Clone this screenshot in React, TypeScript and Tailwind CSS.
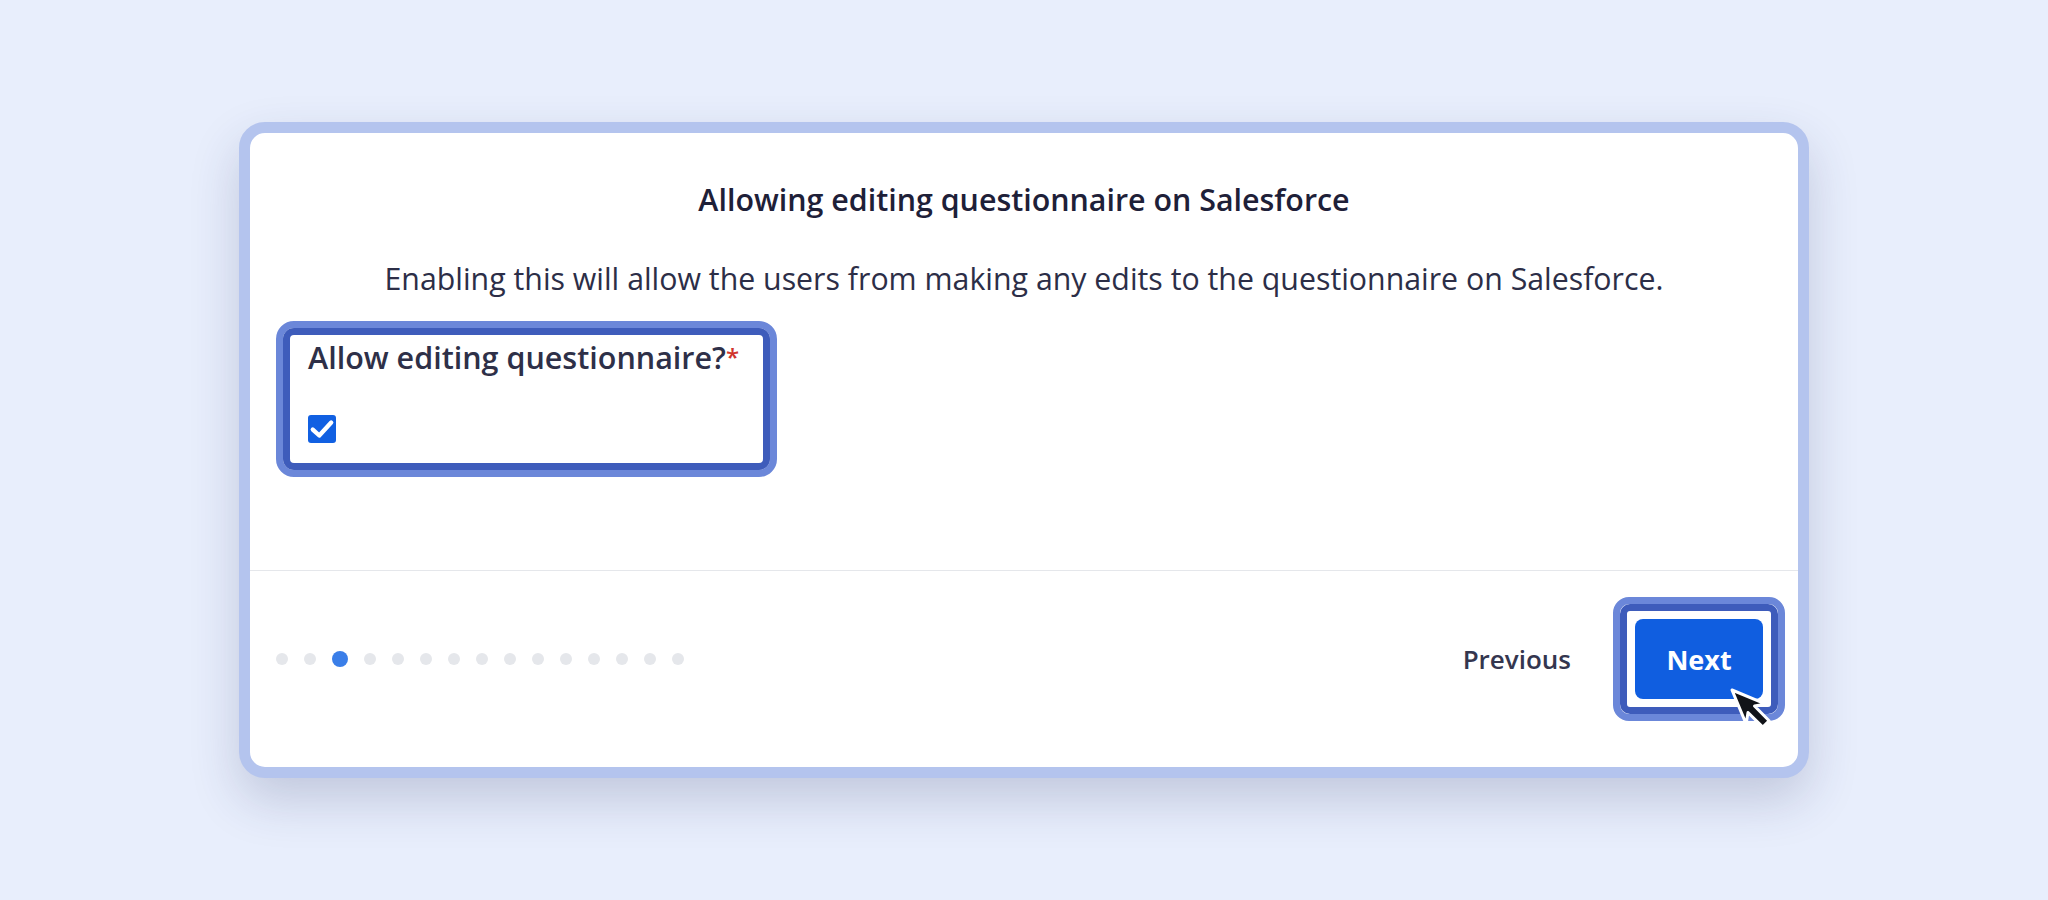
import React from "react";

const font = { fontFamily: "'Open Sans', 'Noto Sans', sans-serif" };

function Cursor() {
  return (
    <svg
      className="absolute left-[110px] top-[84px]"
      width="46"
      height="46"
      viewBox="-2 -2 46 46"
    >
      <path
        d="M0 0 L14.1 33.9 L16 22.5 L30.8 37.1 L37.1 30.8 L22.5 16 L33.9 14.1 Z"
        fill="#111318"
        stroke="#ffffff"
        strokeWidth="3"
        strokeLinejoin="round"
      />
    </svg>
  );
}

export default function App() {
  const dots = Array.from({ length: 15 }, (_, i) => i);
  return (
    <div
      className="w-full h-[900px] bg-[#e8eefc] flex items-center justify-center"
      style={font}
    >
      <div className="w-[1570px] h-[656px] border-[11px] border-[#b4c4ee] rounded-[26px] bg-white shadow-[0_22px_50px_rgba(40,50,100,0.2)] flex flex-col overflow-hidden">
        <div className="h-[437px] px-[26px] pt-[47px] flex flex-col">
          <h1 className="text-center text-[30.4px] leading-[40px] font-semibold text-[#1e2038]">
            Allowing editing questionnaire on Salesforce
          </h1>
          <p className="mt-[41px] text-center text-[30.3px] leading-[36px] text-[#2c2e47]">
            Enabling this will allow the users from making any edits to the
            questionnaire on Salesforce.
          </p>
          <div className="mt-[24px] w-[501px] h-[156px] border-[7px] border-[#6b87d9] rounded-[18px]">
            <div className="h-full border-[7px] border-[#3e5cbb] rounded-[11px] bg-white pl-[18px] pt-[4px]">
              <div className="text-[30.5px] leading-[36px] font-semibold text-[#2e3048]">
                Allow editing questionnaire?
                <span className="text-[#d0342c] text-[24px] align-top">*</span>
              </div>
              <div className="mt-[40px] w-[28px] h-[28px] rounded-[3px] bg-[#1160e2] flex items-center justify-center">
                <svg width="26" height="26" viewBox="0 0 24 24">
                  <path
                    d="M3.5 12.5 L9.5 18 L20.5 6"
                    fill="none"
                    stroke="#ffffff"
                    strokeWidth="4"
                    strokeLinecap="round"
                    strokeLinejoin="round"
                  />
                </svg>
              </div>
            </div>
          </div>
        </div>
        <div className="border-t border-[#e5e7eb] h-[197px] flex items-center justify-between pl-[26px] pr-[13px] pb-[20px]">
          <div className="flex items-center gap-[16px]">
            {dots.map((i) =>
              i === 2 ? (
                <div key={i} className="w-[16px] h-[16px] rounded-full bg-[#3a7ee8]" />
              ) : (
                <div key={i} className="w-[12px] h-[12px] rounded-full bg-[#e5e7eb]" />
              )
            )}
          </div>
          <div className="flex items-center gap-[42px]">
            <span className="text-[26px] leading-[36px] font-semibold text-[#34364f]">
              Previous
            </span>
            <div className="relative w-[172px] h-[124px] border-[7px] border-[#6b87d9] rounded-[16px]">
              <div className="h-full border-[7px] border-[#3e5cbb] rounded-[10px] bg-white p-[8px]">
                <button className="w-full h-full rounded-[8px] bg-[#105ee0] text-white text-[27px] font-bold leading-none">
                  Next
                </button>
              </div>
              <Cursor />
            </div>
          </div>
        </div>
      </div>
    </div>
  );
}
